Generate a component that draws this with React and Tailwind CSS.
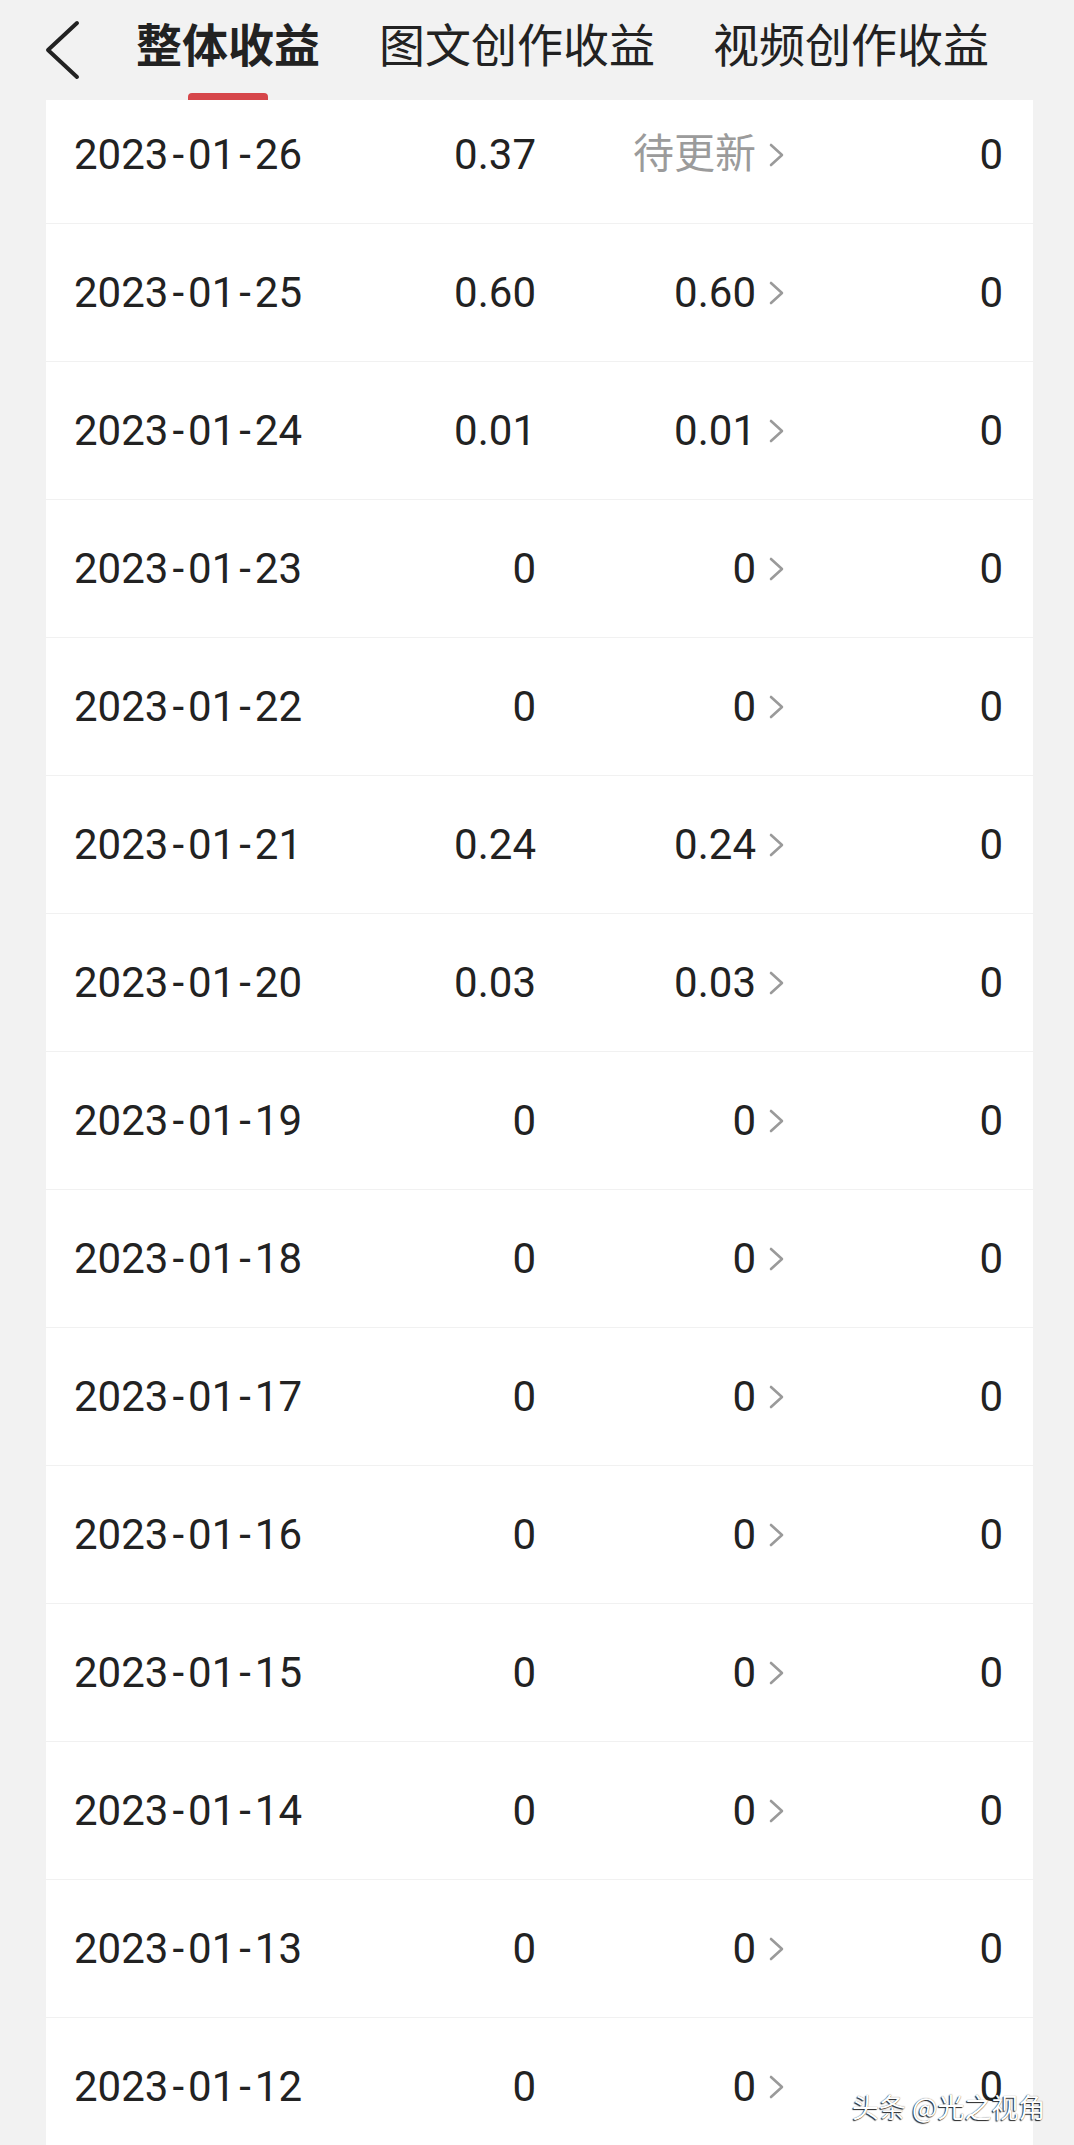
import React from "react";

const rows = [
  ["2023-01-26", "0.37", "待更新", "0"],
  ["2023-01-25", "0.60", "0.60", "0"],
  ["2023-01-24", "0.01", "0.01", "0"],
  ["2023-01-23", "0", "0", "0"],
  ["2023-01-22", "0", "0", "0"],
  ["2023-01-21", "0.24", "0.24", "0"],
  ["2023-01-20", "0.03", "0.03", "0"],
  ["2023-01-19", "0", "0", "0"],
  ["2023-01-18", "0", "0", "0"],
  ["2023-01-17", "0", "0", "0"],
  ["2023-01-16", "0", "0", "0"],
  ["2023-01-15", "0", "0", "0"],
  ["2023-01-14", "0", "0", "0"],
  ["2023-01-13", "0", "0", "0"],
  ["2023-01-12", "0", "0", "0"],
];

function Chevron() {
  return (
    <svg width="17" height="26" viewBox="0 0 17 26" className="ml-[12px] shrink-0">
      <path d="M3 3 L14 13 L3 23" fill="none" stroke="#9a9a9a" strokeWidth="2.6" strokeLinecap="round" strokeLinejoin="round" />
    </svg>
  );
}

function DateText({ value }) {
  const parts = value.split("-");
  return (
    <span>
      {parts[0]}
      <span className="mx-[4px]">-</span>
      {parts[1]}
      <span className="mx-[4px]">-</span>
      {parts[2]}
    </span>
  );
}

function Row({ data, first }) {
  const [date, a, b, c] = data;
  const pending = b === "待更新";
  return (
    <div
      className={
        first
          ? "h-[123px] pb-[14px] px-[28px] grid grid-cols-[226px_236px_249px_1fr] items-center"
          : "h-[138px] px-[28px] border-t border-[#f1f1f1] grid grid-cols-[226px_236px_249px_1fr] items-center"
      }
    >
      <div className="text-left whitespace-nowrap">
        <DateText value={date} />
      </div>
      <div className="text-right">{a}</div>
      <div className="flex items-center justify-end">
        <span className={pending ? "text-[#9b9b9b] text-[41px]" : ""}>{b}</span>
        <Chevron />
      </div>
      <div className="text-right pr-[2px]">{c}</div>
    </div>
  );
}

export default function App() {
  return (
    <div className="relative w-[1074px] h-[2145px] overflow-hidden bg-[#f2f2f2] font-['Roboto','Noto_Sans_CJK_SC',sans-serif]">
      <div className="h-[100px] flex items-start pt-[19px]">
        <svg width="40" height="64" viewBox="0 0 40 64" className="ml-[43px] shrink-0">
          <path d="M34 4 L5 31 L34 58" fill="none" stroke="#222222" strokeWidth="4" strokeLinecap="round" strokeLinejoin="round" />
        </svg>
        <div className="ml-[53px] flex flex-col items-center">
          <span className="text-[46px] leading-[46px] font-bold text-[#222222] font-['Noto_Sans_CJK_SC',sans-serif] whitespace-nowrap">
            整体收益
          </span>
          <div className="mt-[28px] w-[80px] h-[7px] rounded-t-[4px] bg-[#d6464a]" />
        </div>
        <span className="ml-[59px] text-[46px] leading-[46px] text-[#222222] font-['Noto_Sans_CJK_SC',sans-serif] whitespace-nowrap">
          图文创作收益
        </span>
        <span className="ml-[58px] text-[46px] leading-[46px] text-[#222222] font-['Noto_Sans_CJK_SC',sans-serif] whitespace-nowrap">
          视频创作收益
        </span>
      </div>
      <div className="ml-[46px] w-[987px] bg-white text-[42px] leading-none text-[#222222]">
        {rows.map((r, i) => (
          <Row key={r[0]} data={r} first={i === 0} />
        ))}
      </div>
      <div className="absolute left-[852px] top-[2090px] text-[27px] leading-[34px] text-white font-['Noto_Sans_CJK_SC',sans-serif] whitespace-nowrap [text-shadow:-1px_1px_1px_rgba(0,0,0,0.85),0_0_1px_rgba(0,0,0,0.6)]">
        头条 @光之视角
      </div>
    </div>
  );
}
